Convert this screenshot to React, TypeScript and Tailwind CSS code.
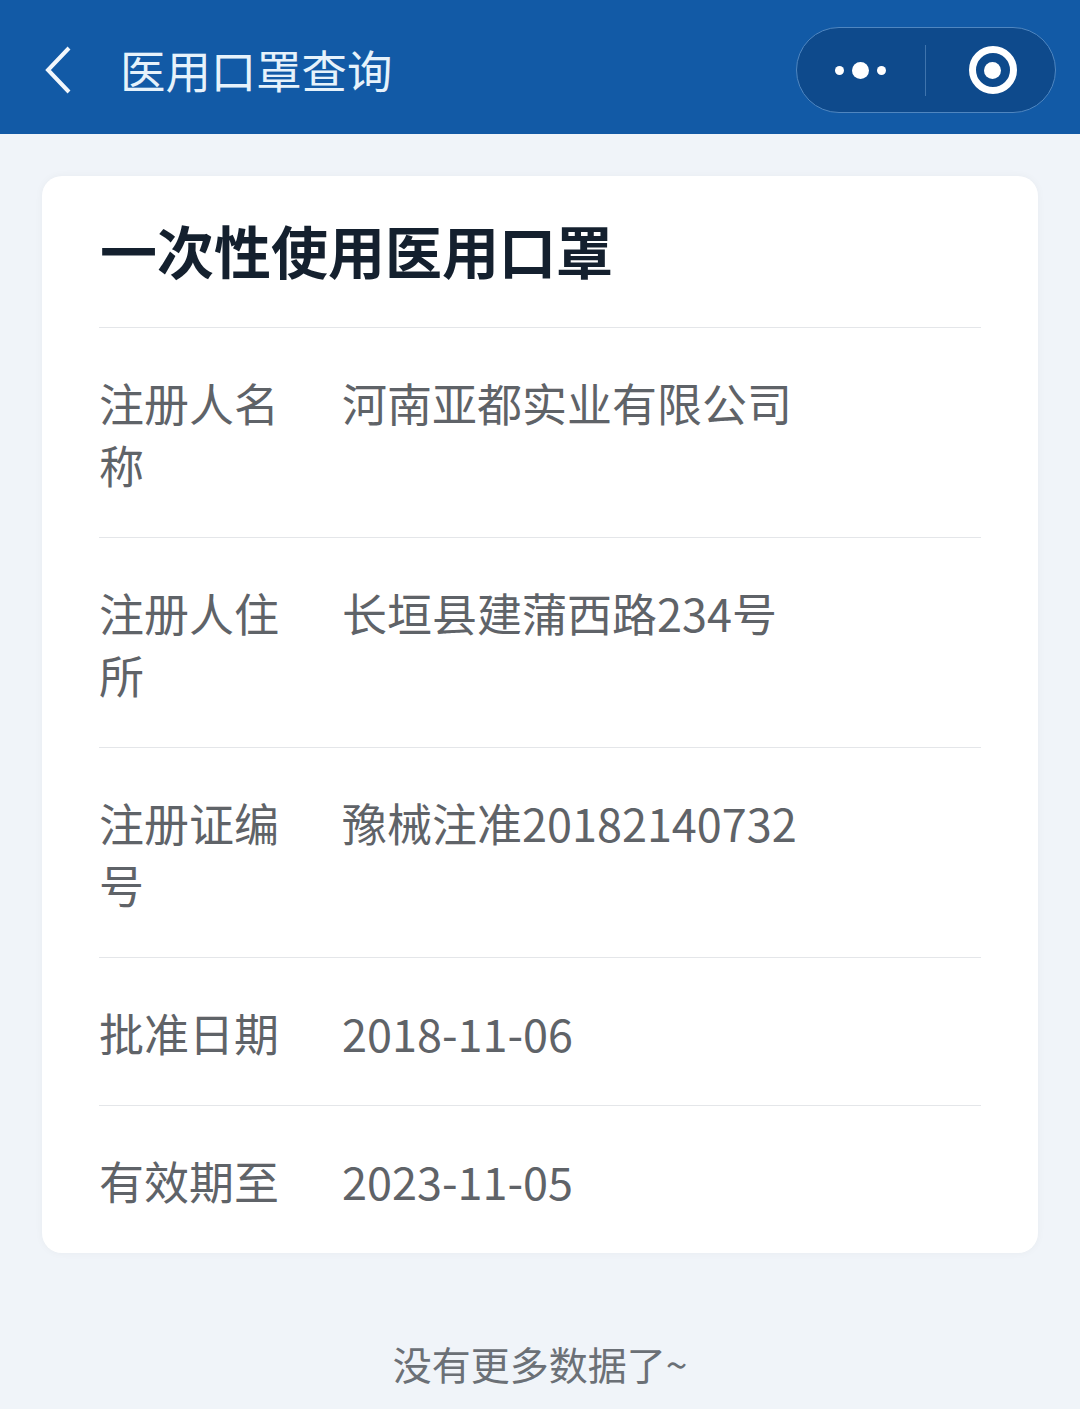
const stack = { fontFamily: '"Noto Sans CJK SC", "Noto Sans", sans-serif' };

function Row({ label, value, h }: { label: string; value: string; h: string }) {
  return (
    <div className={`flex border-t border-[#e4e6e9] ${h} pt-[44px]`}>
      <div className="w-[243px] shrink-0 pr-[60px] text-[45px] leading-[62px] text-[#5f6368]">{label}</div>
      <div className="text-[45px] leading-[62px] text-[#5f6368]">{value}</div>
    </div>
  );
}

export default function App() {
  return (
    <div className="h-[1409px] w-[1080px] overflow-hidden bg-[#f0f4f9]" style={stack}>
      <header className="flex h-[134px] items-center justify-between bg-[#125aa6] pl-[45px] pr-[24px] pt-[6px]">
        <div className="flex items-center">
          <svg width="28" height="48" viewBox="0 0 28 48" fill="none" stroke="#f2f7fc" strokeWidth="4">
            <path d="M24 2 3 24l21 22" />
          </svg>
          <span className="ml-[47px] -translate-y-px text-[45.4px] leading-[62px] text-[#e6f2fb]">医用口罩查询</span>
        </div>
        <div className="flex h-[86px] w-[260px] items-center rounded-full border border-[#4f86c0] bg-[#0e4a8c]">
          <div className="flex w-[128px] items-center justify-center gap-[8px] pr-[2px]">
            <span className="h-[9px] w-[9px] rounded-full bg-white" />
            <span className="h-[17px] w-[17px] rounded-full bg-white" />
            <span className="h-[9px] w-[9px] rounded-full bg-white" />
          </div>
          <div className="h-[51px] w-px bg-[#3f74ad]" />
          <div className="flex flex-1 items-center justify-center pl-[4px]">
            <div className="flex h-[48px] w-[48px] items-center justify-center rounded-full border-[7px] border-white">
              <div className="h-[17px] w-[17px] rounded-full bg-white" />
            </div>
          </div>
        </div>
      </header>
      <main className="px-[42px] pt-[42px]">
        <section className="h-[1077px] rounded-[20px] bg-white px-[57px] shadow-[0_0_8px_rgba(0,0,0,0.04)]">
          <h1 className="h-[151px] pl-px pt-[40px] text-[57px] font-bold leading-[66px] text-[#14202e]">一次性使用医用口罩</h1>
          <Row label="注册人名称" value="河南亚都实业有限公司" h="h-[210px]" />
          <Row label="注册人住所" value="长垣县建蒲西路234号" h="h-[210px]" />
          <Row label="注册证编号" value="豫械注准20182140732" h="h-[210px]" />
          <Row label="批准日期" value="2018-11-06" h="h-[148px]" />
          <Row label="有效期至" value="2023-11-05" h="h-[148px]" />
        </section>
        <p className="mt-[80px] text-center text-[39px] leading-[60px] text-[#6b7076]">没有更多数据了~</p>
      </main>
    </div>
  );
}
